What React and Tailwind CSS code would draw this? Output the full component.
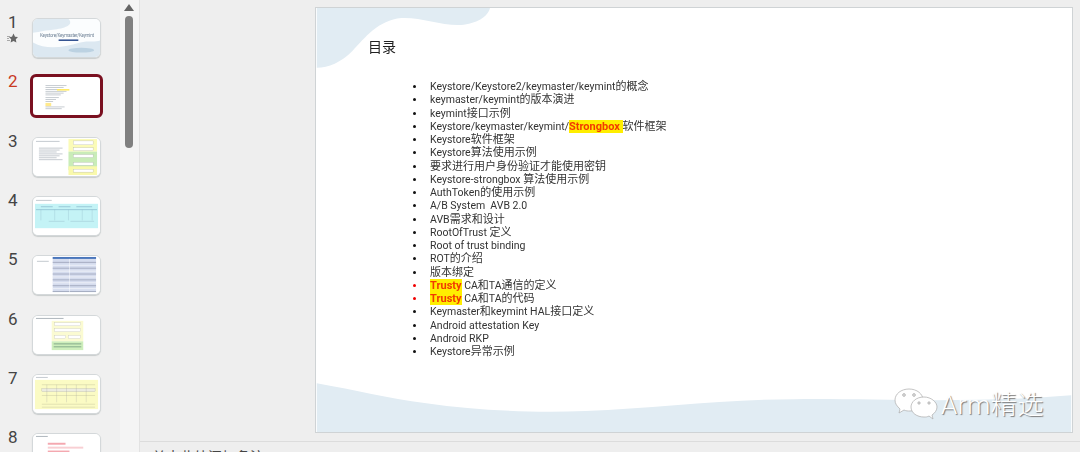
import React from 'react';

const cjk = "font-['Roboto','Noto_Sans_CJK_SC',sans-serif]";

// latin runs are set a little smaller than the chinese ones
const Mixed = ({ text }) =>
  text.split(/([\x00-\x7f]+)/).map((part, i) =>
    i % 2 ? <span key={i} className="text-[10.5px]">{part}</span> : part
  );

const Hl = ({ children }) => (
  <span className="bg-[#ffee00] font-bold text-[#f23a00]">{children}</span>
);

const items = [
  { text: <Mixed text="Keystore/Keystore2/keymaster/keymint的概念" /> },
  { text: <Mixed text="keymaster/keymint的版本演进" /> },
  { text: <Mixed text="keymint接口示例" /> },
  { text: <><Mixed text="Keystore/keymaster/keymint/" /><Hl>Strongbox </Hl>软件框架</> },
  { text: <Mixed text="Keystore软件框架" /> },
  { text: <Mixed text="Keystore算法使用示例" /> },
  { text: '要求进行用户身份验证才能使用密钥' },
  { text: <Mixed text="Keystore-strongbox 算法使用示例" /> },
  { text: <Mixed text="AuthToken的使用示例" /> },
  { text: <Mixed text="A/B System  AVB 2.0" /> },
  { text: <Mixed text="AVB需求和设计" /> },
  { text: <Mixed text="RootOfTrust 定义" /> },
  { text: <Mixed text="Root of trust binding" /> },
  { text: <Mixed text="ROT的介绍" /> },
  { text: '版本绑定' },
  { text: <><Hl>Trusty</Hl><Mixed text=" CA和TA通信的定义" /></>, red: true },
  { text: <><Hl>Trusty</Hl><Mixed text=" CA和TA的代码" /></>, red: true },
  { text: <Mixed text="Keymaster和keymint HAL接口定义" /> },
  { text: <Mixed text="Android attestation Key" /> },
  { text: <Mixed text="Android RKP" /> },
  { text: <Mixed text="Keystore异常示例" /> },
];

const lines = (x, y, w, n, gap, color = '#aab2ba') =>
  Array.from({ length: n }, (_, i) => (
    <rect key={i} x={x} y={y + i * gap} width={w - (i % 3) * 3} height="0.7" fill={color} />
  ));

const thumbs = [
  <>
    <path d="M0 0H68V39H0Z" fill="#fbfdfe" />
    <path d="M6 0H36C42 6 32 10 20 11C10 12 4 14 0 14V0Z" fill="#dfeaf2" />
    <path d="M0 24C14 32 30 29 48 24C56 22 64 24 68 22V39H0Z" fill="#dce8f1" />
    <ellipse cx="49" cy="32" rx="13" ry="2.5" fill="#bcd2e2" />
    <text x="7" y="18.5" fontSize="4.6" textLength="55" fill="#6f8296">Keystore/Keymaster/Keymint</text>
    <rect x="26" y="21" width="20" height="1.5" fill="#25478a" />
  </>,
  <>
    <path d="M0 0H68V38H0Z" fill="#fff" />
    {lines(12, 8, 22, 6, 2)}
    <rect x="24" y="12" width="13" height="1.6" fill="#ffe95a" />
    {lines(12, 21, 14, 3, 2)}
    <rect x="12" y="27" width="6" height="3.5" fill="#ffe98c" />
    {lines(12, 31, 20, 2, 2)}
  </>,
  <>
    <path d="M0 0H68V39H0Z" fill="#fff" />
    <rect x="36" y="1" width="29" height="13" fill="#fbfbb8" />
    <rect x="36" y="14" width="29" height="19" fill="#c9ecb8" />
    <rect x="36" y="29" width="29" height="9" fill="#f9f9ac" />
    <rect x="41" y="3" width="20" height="4" fill="#fff" stroke="#aaa" strokeWidth="0.3" />
    <rect x="41" y="10" width="20" height="3" fill="#fff" stroke="#aaa" strokeWidth="0.3" />
    <rect x="41" y="17" width="20" height="3" fill="#fff" stroke="#aaa" strokeWidth="0.3" />
    <rect x="41" y="25" width="20" height="3" fill="#fff" stroke="#aaa" strokeWidth="0.3" />
    <rect x="41" y="32" width="20" height="3" fill="#fff" stroke="#aaa" strokeWidth="0.3" />
    {lines(3, 3, 24, 1, 2)}
    {lines(6, 10, 24, 7, 2)}
  </>,
  <>
    <path d="M0 0H68V39H0Z" fill="#fff" />
    {lines(3, 3, 16, 1, 2)}
    <rect x="2" y="7" width="64" height="25" fill="#c4f3f6" />
    <path d="M3 13H65M8 10H20M26 10H38M44 10H60" stroke="#6b9cb8" strokeWidth="0.5" fill="none" />
    <path d="M8 13V24M22 13V24M36 13V24M50 13V24M60 13V24" stroke="#8fb4c4" strokeWidth="0.3" />
    <path d="M16 25H32M38 25H62" stroke="#8fb4c4" strokeWidth="0.4" />
  </>,
  <>
    <path d="M0 0H68V39H0Z" fill="#fff" />
    <rect x="20" y="1" width="44" height="36" fill="#d5dcee" />
    <rect x="20" y="1" width="44" height="2" fill="#4a76bb" />
    {Array.from({ length: 11 }, (_, i) => (
      <rect key={i} x="20" y={6 + i * 3} width="44" height="1" fill={i % 2 ? '#eef1f8' : '#a4abc0'} />
    ))}
    <rect x="37" y="3" width="0.5" height="34" fill="#fff" />
    {lines(4, 5, 12, 1, 2)}
  </>,
  <>
    <path d="M0 0H68V39H0Z" fill="#fff" />
    {lines(3, 2, 28, 1, 2, '#89939d')}
    <rect x="19" y="5" width="32" height="21" fill="#fbfbd2" />
    <rect x="19" y="26" width="32" height="9" fill="#cdeebb" />
    <rect x="22" y="7" width="26" height="3" fill="#fff" stroke="#bbb" strokeWidth="0.3" />
    <rect x="22" y="13" width="26" height="3" fill="#fff" stroke="#bbb" strokeWidth="0.3" />
    <rect x="22" y="20" width="11" height="3" fill="#fff" stroke="#bbb" strokeWidth="0.3" />
    <rect x="36" y="20" width="12" height="3" fill="#fff" stroke="#bbb" strokeWidth="0.3" />
    <rect x="21" y="28" width="28" height="1.2" fill="#8fb592" />
    <rect x="21" y="31" width="28" height="1.2" fill="#8fb592" />
  </>,
  <>
    <path d="M0 0H68V39H0Z" fill="#fff" />
    {lines(3, 2, 12, 1, 2)}
    <rect x="2" y="5" width="64" height="30" fill="#fbfbc4" />
    <path d="M9 10H63M9 16H63M9 21H63M9 30H63M9 33H63" stroke="#a5a585" strokeWidth="0.3" />
    <rect x="9" y="14" width="54" height="3" fill="#ecece0" stroke="#aaa" strokeWidth="0.3" />
    <path d="M14 10V28M24 10V28M34 10V28M44 10V28M54 10V28" stroke="#aaa" strokeWidth="0.3" />
  </>,
  <>
    <path d="M0 0H68V39H0Z" fill="#fff" />
    {lines(3, 2, 12, 1, 2, '#89939d')}
    <rect x="15" y="9" width="18" height="2" fill="#f4a8b0" />
    <rect x="15" y="13" width="36" height="2" fill="#f8cfd3" />
    <rect x="15" y="17" width="22" height="2" fill="#f4a8b0" />
  </>,
];

const Thumb = ({ n, selected, children }) => (
  <div className="h-[59.35px] flex items-start relative">
    <span className={`w-[25px] pl-[8px] text-[17px] leading-[21px] ${selected ? 'text-[#c8391f]' : 'text-[#444]'}`}>{n}</span>
    {n === 1 && (
      <svg className="absolute left-[7px] top-[21px] w-[11px] h-[10px]" viewBox="0 0 11 10">
        <path d="M6.5 0.5L8 3.7L11 4.1L8.8 6.2L9.4 9.5L6.5 7.9L3.6 9.5L4.2 6.2L2 4.1L5 3.7Z" fill="#666" />
        <path d="M0 3.5H3M0 5.5H2M0 7.5H3" stroke="#888" strokeWidth="0.7" />
      </svg>
    )}
    <div className={`overflow-hidden bg-white ${selected ? 'ml-[5px] mt-[3px] w-[73px] h-[44px] p-[1px] rounded-[6px] border-[3px] border-[#7a1020]' : 'ml-[7px] mt-[6px] w-[69px] h-[40px] rounded-[6px] border border-[#d4d8da] shadow-[0_1px_1px_#c8cccc]'}`}>
      <svg className="block w-full h-full blur-[0.6px]" viewBox="0 0 68 39" preserveAspectRatio="none">
        {children}
      </svg>
    </div>
  </div>
);

export default function App() {
  return (
    <div className={`w-[1080px] h-[452px] overflow-hidden flex bg-[#eeeeee] ${cjk}`}>
      <div className="w-[120px] shrink-0 bg-[#f0f0f0] pt-[12px]">
        {thumbs.map((t, i) => (
          <Thumb key={i} n={i + 1} selected={i === 1}>{t}</Thumb>
        ))}
      </div>

      <div className="w-[20px] shrink-0 bg-[#f4f4f4] border-r border-[#e2e2e2] flex flex-col items-center pr-[1px] pt-[4px]">
        <div className="w-0 h-0 border-x-[5px] border-x-transparent border-b-[7px] border-b-[#666]" />
        <div className="w-[8px] h-[132px] mt-[5px] rounded-full bg-[#808080]" />
      </div>

      <div className="flex-1 flex flex-col min-w-0">
        <div className="h-[441px] shrink-0 pt-[7px] pl-[175px]">
          <div className="relative w-[758px] h-[426px] bg-white border border-[#cfd3d5] overflow-hidden">
            <svg className="absolute inset-0 w-full h-full" viewBox="0 0 758 426">
              <path d="M0 0H174C172 9 160 16 145 17C125 18 105 9 85 10C62 12 48 30 36 43C24 55 12 60 0 60Z" fill="#e1ecf3" />
              <path d="M0 377C40 384 70 392 110 397C160 404 210 407 270 405C340 402 410 393 480 393C560 392 650 398 758 389V426H0Z" fill="#e1ecf3" />
            </svg>
            <div className="relative pl-[52px] pt-[29px] text-[#222] blur-[0.3px]">
              <h1 className="text-[14px] leading-[20px] font-normal">目录</h1>
              <ul className="mt-[23px] pl-[44px] text-[11px] leading-[13.25px] text-[#333]">
                {items.map((it, i) => (
                  <li key={i} className="flex items-center whitespace-pre">
                    <span className="w-[18px] pl-[1px]">
                      <span className={`block w-[3px] h-[3px] rounded-full ${it.red ? 'bg-[#f00000]' : 'bg-[#111]'}`} />
                    </span>
                    <span>{it.text}</span>
                  </li>
                ))}
              </ul>
            </div>
          </div>
        </div>
        <div className="flex-1 border-t border-[#dcdcdc] pl-[12px] pt-[5px] text-[14px] leading-[20px] text-[#444]">
          单击此处添加备注
        </div>
      </div>

      {/* watermark over the slide */}
      <div className="absolute left-[894px] top-[388px] flex items-center">
        <svg className="w-[44px] h-[34px]" viewBox="0 0 44 34" fill="#fff" stroke="#aaa" strokeWidth="0.7">
          <path d="M15 1C7 1 1 6 1 12C1 16 3 18 6 21L5 25L10 22C12 23 14 23 16 23C22 23 29 18 29 12C29 6 23 1 15 1Z" />
          <path d="M30 9C22 9 17 14 17 19C17 25 23 29 30 29C32 29 33 29 35 28L39 31L38 27C41 25 43 22 43 19C43 14 37 9 30 9Z" />
          <circle cx="10" cy="7" r="1.4" fill="#ddd" />
          <circle cx="20" cy="7" r="1.4" fill="#ddd" />
          <circle cx="25" cy="15" r="1.2" fill="#ddd" />
          <circle cx="35" cy="15" r="1.2" fill="#ddd" />
        </svg>
        <span className="ml-[3px] text-[26px] leading-[32px] tracking-[0.6px] font-light text-white [text-shadow:1px_1px_1px_#777]">Arm精选</span>
      </div>
    </div>
  );
}
